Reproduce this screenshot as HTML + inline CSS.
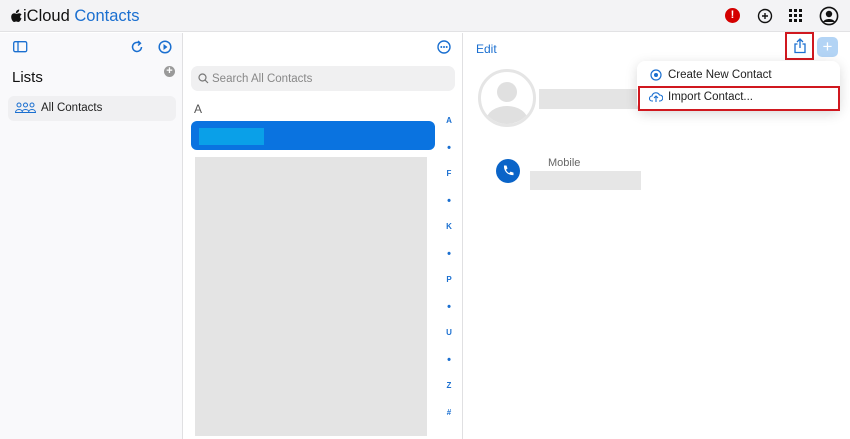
<!DOCTYPE html>
<html><head><style>
*{margin:0;padding:0;box-sizing:border-box}
body{width:850px;height:439px;overflow:hidden;font-family:"Liberation Sans",sans-serif;background:#fff;position:relative}
.a{position:absolute}
.blue{color:#1a6fd0}
.ix div{height:26.5px;line-height:26.5px}
.ix .d{font-size:11px}
</style></head><body>
<div class="a" style="left:0;top:0;width:850px;height:32px;background:#f3f3f5;border-bottom:1px solid #e2e2e4"></div>
<svg class="a" style="left:11px;top:9px" width="11" height="13"><path d="M8.2 0.5c.1 1-.3 2-1 2.6-.6.6-1.5 1-2.3.9-.1-1 .4-2 1-2.5.6-.6 1.6-1 2.3-1zM10.6 9.3c-.4 1-.8 1.6-1.3 2.3-.6.9-1.4 1.4-2.1 1.4-.8 0-1-.5-2-.5s-1.3.5-2 .5c-.8 0-1.5-.8-2-1.6C0.2 9.600-.2 7.300.7 5.800c.6-1 1.600-1.600 2.600-1.600 1 0 1.600.6 2.400.6.8 0 1.300-.6 2.500-.6.900 0 1.800.5 2.400 1.300-2.100 1.200-1.800 4.200 0 3.800z" fill="#111"/></svg>
<div class="a" style="left:23px;top:7px;font-size:16.5px;color:#111">iCloud <span style="color:#1a6fd0">Contacts</span></div>
<div class="a" style="left:725px;top:8px;width:15px;height:15px;border-radius:50%;background:#d40000;color:#fff;font-size:11px;font-weight:bold;text-align:center;line-height:15px">!</div>
<svg class="a" style="left:757px;top:8px" width="16" height="16"><circle cx="8" cy="8" r="6.5" fill="none" stroke="#111" stroke-width="1.4"/><path d="M8 5v6M5 8h6" stroke="#111" stroke-width="1.4"/></svg>
<svg class="a" style="left:789px;top:9px" width="16" height="14" fill="#111"><g><rect x="0" y="0" width="3" height="3"/><rect x="5" y="0" width="3" height="3"/><rect x="10" y="0" width="3" height="3"/><rect x="0" y="5" width="3" height="3"/><rect x="5" y="5" width="3" height="3"/><rect x="10" y="5" width="3" height="3"/><rect x="0" y="10" width="3" height="3"/><rect x="5" y="10" width="3" height="3"/><rect x="10" y="10" width="3" height="3"/></g></svg>
<svg class="a" style="left:819px;top:6px" width="20" height="20"><circle cx="10" cy="10" r="8.6" fill="none" stroke="#111" stroke-width="1.6"/><circle cx="10" cy="8" r="3.2" fill="#111"/><path d="M4 16c2-4 10-4 12 0" fill="#111"/></svg>
<!-- sidebar -->
<div class="a" style="left:0;top:33px;width:183px;height:406px;background:#f9f9fb;border-right:1px solid #e0e0e2"></div>
<svg class="a" style="left:13px;top:41px" width="15" height="12"><rect x="0.7" y="0.7" width="13" height="10" rx="1.5" fill="none" stroke="#1a6fd0" stroke-width="1.3"/><path d="M5 1v10" stroke="#1a6fd0" stroke-width="1.3"/></svg>
<svg class="a" style="left:130px;top:39px" width="15" height="15"><path d="M11.5 8a4.5 4.5 0 1 1-2-3.8" fill="none" stroke="#1a6fd0" stroke-width="1.5"/><path d="M8 2l2.5 2.3L8 6.5" fill="none" stroke="#1a6fd0" stroke-width="1.4"/></svg>
<svg class="a" style="left:158px;top:40px" width="14" height="14"><circle cx="7" cy="7" r="5.8" fill="none" stroke="#1a6fd0" stroke-width="1.5"/><path d="M5.5 4l4 3-4 3z" fill="#1a6fd0"/></svg>
<div class="a" style="left:12px;top:69px;font-size:15px;color:#111">Lists</div>
<div class="a" style="left:164px;top:66px;width:11px;height:11px;border-radius:50%;background:#9a9a9a;color:#fff;font-size:11px;line-height:11px;text-align:center;font-weight:bold">+</div>
<div class="a" style="left:8px;top:96px;width:168px;height:25px;background:#f0f0f2;border-radius:6px"></div>
<svg class="a" style="left:15px;top:102px" width="21" height="11"><g fill="none" stroke="#1a6fd0" stroke-width="1"><circle cx="4" cy="3" r="2"/><circle cx="10.5" cy="3" r="2"/><circle cx="17" cy="3" r="2"/><path d="M0.5 10.5c0-4 7-4 7 0zM7 10.5c0-4 7-4 7 0zM13.5 10.5c0-4 7-4 7 0z"/></g></svg>
<div class="a" style="left:41px;top:102px;font-size:11.5px;color:#222">All Contacts</div>
<!-- list -->
<div class="a" style="left:462px;top:33px;width:1px;height:406px;background:#e0e0e2"></div>
<svg class="a" style="left:437px;top:40px" width="14" height="14"><circle cx="7" cy="7" r="6" fill="none" stroke="#1a6fd0" stroke-width="1.4"/><circle cx="4.3" cy="7" r="1" fill="#1a6fd0"/><circle cx="7" cy="7" r="1" fill="#1a6fd0"/><circle cx="9.7" cy="7" r="1" fill="#1a6fd0"/></svg>
<div class="a" style="left:191px;top:66px;width:264px;height:25px;background:#f0f0f1;border-radius:7px"></div>
<svg class="a" style="left:198px;top:73px" width="11" height="11"><circle cx="4.5" cy="4.5" r="3.5" fill="none" stroke="#777" stroke-width="1.2"/><path d="M7 7l3 3" stroke="#777" stroke-width="1.2"/></svg>
<div class="a" style="left:212px;top:73px;font-size:11.5px;color:#888">Search All Contacts</div>
<div class="a" style="left:194px;top:102px;font-size:12px;color:#555">A</div>
<div class="a" style="left:191px;top:121px;width:244px;height:29px;background:#0a73e0;border-radius:6px"></div>
<div class="a" style="left:199px;top:128px;width:65px;height:17px;background:#0aa0e8"></div>
<div class="a" style="left:195px;top:157px;width:232px;height:279px;background:#e4e4e4"></div>
<div class="a ix" style="left:443px;top:108px;width:12px;font-size:8px;font-weight:bold;color:#1a6fd0;text-align:center"><div>A</div><div class="d">•</div><div>F</div><div class="d">•</div><div>K</div><div class="d">•</div><div>P</div><div class="d">•</div><div>U</div><div class="d">•</div><div>Z</div><div>#</div></div>
<!-- detail -->
<div class="a blue" style="left:476px;top:42px;font-size:12px">Edit</div>
<div class="a" style="left:539px;top:89px;width:100px;height:20px;background:#e4e4e4"></div>
<div class="a" style="left:785px;top:32px;width:29px;height:28px;border:2px solid #d0181f"></div>
<svg class="a" style="left:793px;top:38px" width="14" height="16"><path d="M4.5 6H2v8.5h10V6H9.5M7 1v9M4 4l3-3 3 3" fill="none" stroke="#1a6fd0" stroke-width="1.3"/></svg>
<div class="a" style="left:817px;top:37px;width:21px;height:20px;border-radius:5px;background:#b3d4f5;color:#fff;font-size:17px;text-align:center;line-height:20px">+</div>
<div class="a" style="left:478px;top:69px;width:58px;height:58px;border-radius:50%;border:3px solid #e5e5e5;overflow:hidden"><div style="position:absolute;left:16px;top:10px;width:20px;height:20px;border-radius:50%;background:#e0e0e0"></div><div style="position:absolute;left:5px;top:34px;width:42px;height:30px;border-radius:50%;background:#e0e0e0"></div></div>
<div class="a" style="left:637px;top:61px;width:203px;height:50px;background:#fff;border-radius:8px;box-shadow:0 3px 12px rgba(0,0,0,.15)"></div>
<svg class="a" style="left:650px;top:69px" width="12" height="12"><circle cx="6" cy="6" r="5" fill="none" stroke="#1a6fd0" stroke-width="1.2"/><circle cx="6" cy="6" r="2" fill="#1a6fd0"/></svg>
<div class="a" style="left:668px;top:69px;font-size:11.5px;color:#222">Create New Contact</div>
<div class="a" style="left:638px;top:86px;width:202px;height:25px;border:2px solid #d0181f"></div>
<svg class="a" style="left:649px;top:91px" width="14" height="12"><path d="M4 10H3a2.5 2.5 0 0 1 0-5 4 4 0 0 1 7.5-1A3 3 0 0 1 11 10h-1M7 11V5M5 7l2-2 2 2" fill="none" stroke="#1a6fd0" stroke-width="1.1"/></svg>
<div class="a" style="left:668px;top:91px;font-size:11.5px;color:#222">Import Contact...</div>
<div class="a" style="left:496px;top:159px;width:24px;height:24px;border-radius:50%;background:#0a64c8"></div>
<svg class="a" style="left:501px;top:164px" width="14" height="14"><path d="M3 1.5l2.5 0 1 3-1.5 1.2c.8 1.7 2 2.9 3.3 3.4l1.2-1.5 3 1v2.5c-6 .5-10-4.5-9.5-9.6z" fill="#fff"/></svg>
<div class="a" style="left:548px;top:157px;font-size:11px;color:#666">Mobile</div>
<div class="a" style="left:530px;top:171px;width:111px;height:19px;background:#e6e6e6"></div>
</body></html>
